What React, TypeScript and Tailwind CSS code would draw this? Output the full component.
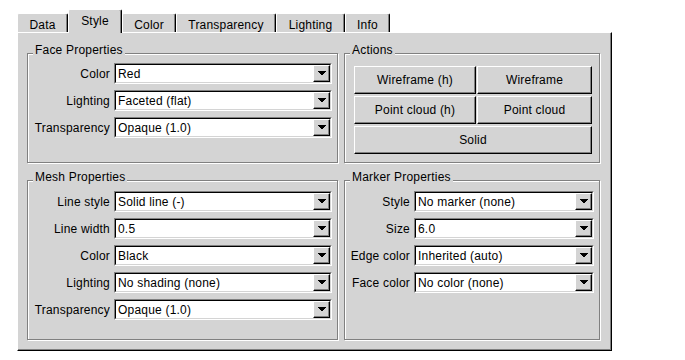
import React from 'react';

const tabs = [
  { name: 'Data', w: 'w-[51px]' },
  { name: 'Style', w: 'w-[54px]', active: true },
  { name: 'Color', w: 'w-[54px]' },
  { name: 'Transparency', w: 'w-[100px]' },
  { name: 'Lighting', w: 'w-[69px]' },
  { name: 'Info', w: 'w-[45px]' },
];

function Combo({ value }: { value: string }) {
  return (
    <div className="flex h-[21px] flex-1 border border-t-[#808080] border-l-[#808080] border-b-white border-r-white">
      <div className="flex flex-1 items-center border border-t-black border-l-black border-b-[#d4d4d4] border-r-[#d4d4d4] bg-white">
        <span className="flex-1 truncate pl-[2px]">{value}</span>
        <div className="flex h-full w-[17px] items-center justify-center border border-t-white border-l-white border-b-black border-r-black bg-[#d4d4d4] shadow-[inset_-1px_-1px_0_#808080]">
          <svg width="8" height="5" viewBox="0 0 8 5" shapeRendering="crispEdges">
            <path d="M0 0h8L4 5z" fill="#000" />
          </svg>
        </div>
      </div>
    </div>
  );
}

function Row({ label, value, labelW }: { label: string; value: string; labelW: string }) {
  return (
    <div className="flex items-center">
      <span className={`${labelW} flex shrink-0 justify-end whitespace-nowrap pr-[4px]`}>{label}</span>
      <Combo value={value} />
    </div>
  );
}

function Group({ title, className, children }: { title: string; className: string; children: React.ReactNode }) {
  return (
    <div className={`relative border border-[#808080] shadow-[inset_1px_1px_0_#fff,1px_1px_0_#fff] ${className}`}>
      <span className="absolute left-[5px] top-[-11px] whitespace-nowrap bg-[#d4d4d4] px-[2px] leading-[14px]">{title}</span>
      {children}
    </div>
  );
}

function Btn({ label, className = '' }: { label: string; className?: string }) {
  return (
    <div className={`flex h-[28px] items-center justify-center whitespace-nowrap border border-t-white border-l-white border-b-black border-r-black bg-[#d4d4d4] shadow-[inset_-1px_-1px_0_#808080] ${className}`}>
      {label}
    </div>
  );
}

export default function App() {
  return (
    <div className="h-[360px] w-[685px] bg-white pl-[17px] pt-[9px] font-['Liberation_Sans',Arial,sans-serif] text-[12px] leading-[14px] tracking-[0.2px] text-black">
      {/* Tabs */}
      <div className="flex h-[23px] items-end">
        {tabs.map((t) =>
          t.active ? (
            <div
              key={t.name}
              className={`${t.w} relative z-10 mb-[-1px] h-[24px] whitespace-nowrap rounded-t-[2px] border-l border-t border-r border-l-white border-t-white border-r-black bg-[#d4d4d4] pt-[4px] text-center shadow-[inset_-1px_0_0_#808080]`}
            >
              {t.name}
            </div>
          ) : (
            <div
              key={t.name}
              className={`${t.w} h-[19px] whitespace-nowrap rounded-t-[2px] border-l border-t border-r border-l-white border-t-white border-r-black bg-[#d4d4d4] pt-[4px] text-center shadow-[inset_-1px_0_0_#808080]`}
            >
              {t.name}
            </div>
          )
        )}
      </div>

      {/* Tab body */}
      <div className="h-[319px] w-[595px] border border-t-white border-l-white border-b-black border-r-black bg-[#d4d4d4] pb-[10px] pl-[9px] pr-[11px] pt-[20px] shadow-[inset_-1px_-1px_0_#808080]">
        <div className="grid grid-cols-[311px_256px] grid-rows-[110px_160px] gap-x-[6px] gap-y-[17px]">
          <Group title="Face Properties" className="flex flex-col gap-[6px] pl-[6px] pr-[5px] pt-[9px]">
            <Row label="Color" value="Red" labelW="w-[80px]" />
            <Row label="Lighting" value="Faceted (flat)" labelW="w-[80px]" />
            <Row label="Transparency" value="Opaque (1.0)" labelW="w-[80px]" />
          </Group>

          <Group title="Actions" className="pl-[9px] pr-[7px] pt-[12px]">
            <div className="grid grid-cols-[122px_115px] gap-x-[1px] gap-y-[2px]">
              <Btn label="Wireframe (h)" />
              <Btn label="Wireframe" />
              <Btn label="Point cloud (h)" />
              <Btn label="Point cloud" />
              <Btn label="Solid" className="col-span-2" />
            </div>
          </Group>

          <Group title="Mesh Properties" className="flex flex-col gap-[6px] pl-[6px] pr-[5px] pt-[10px]">
            <Row label="Line style" value="Solid line (-)" labelW="w-[80px]" />
            <Row label="Line width" value="0.5" labelW="w-[80px]" />
            <Row label="Color" value="Black" labelW="w-[80px]" />
            <Row label="Lighting" value="No shading (none)" labelW="w-[80px]" />
            <Row label="Transparency" value="Opaque (1.0)" labelW="w-[80px]" />
          </Group>

          <Group title="Marker Properties" className="flex flex-col gap-[6px] pl-[6px] pr-[5px] pt-[10px]">
            <Row label="Style" value="No marker (none)" labelW="w-[63px]" />
            <Row label="Size" value="6.0" labelW="w-[63px]" />
            <Row label="Edge color" value="Inherited (auto)" labelW="w-[63px]" />
            <Row label="Face color" value="No color (none)" labelW="w-[63px]" />
          </Group>
        </div>
      </div>
    </div>
  );
}
